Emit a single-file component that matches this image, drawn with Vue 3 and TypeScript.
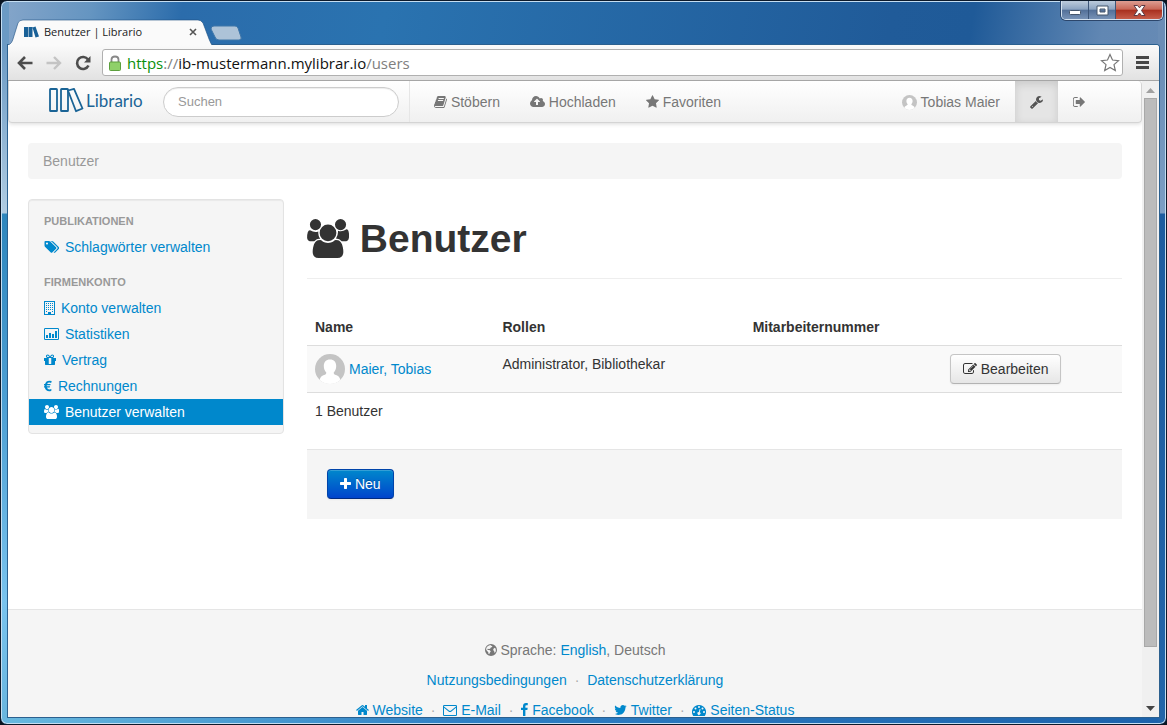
<script setup lang="ts">
import { h, ref } from 'vue'
import type { FunctionalComponent } from 'vue'

interface Glyph {
  x: number
  w: number
  d: string
}

const glyphs: Record<string, Glyph> = {
  book: { x: 64, w: 1664, d: 'M1703 478q40 57 18 129l-275 906q-19 64-76.500 107.500t-122.500 43.500h-923q-77 0-148.500-53.500t-99.500-131.500q-24-67-2-127 0-4 3-27t4-37q1-8-3-21.500t-3-19.500q2-11 8-21t16.500-23.500 16.500-23.500q23-38 45-91.500t30-91.500q3-10 .5-30t-.5-28q3-11 17-28t17-23q21-36 42-92t25-90q1-9-2.500-32t.5-28q4-13 22-30.500t22-22.500q19-26 42.500-84.500t27.500-96.500q1-8-3-25.500t-2-26.500q2-8 9-18t18-23 17-21q8-12 16.500-30.500t15-35 16-36 19.500-32 26.500-23.500 36-11.500 47.500 5.500l-1 3q38-9 51-9h761q74 0 114 56t18 130l-274 906q-36 119-71.500 153.500t-128.500 34.500h-869q-27 0-38 15-11 16-1 43 24 70 144 70h923q29 0 56-15.500t35-41.500l300-987q7-22 5-57 38 15 59 43zm-1064 2q-4 13 2 22.500t20 9.500h608q13 0 25.500-9.500t16.500-22.500l21-64q4-13-2-22.500t-20-9.500h-608q-13 0-25.500 9.500t-16.500 22.500zm-83 256q-4 13 2 22.500t20 9.500h608q13 0 25.500-9.500t16.500-22.500l21-64q4-13-2-22.500t-20-9.500h-608q-13 0-25.500 9.500t-16.500 22.500z' },
  cloud: { x: 64, w: 1920, d: 'M1344 864q0-14-9-23l-352-352q-9-9-23-9t-23 9l-351 351q-10 12-10 24 0 14 9 23t23 9h224v352q0 13 9.500 22.500t22.500 9.500h192q13 0 22.500-9.500t9.500-22.500v-352h224q13 0 22.500-9.500t9.500-22.500zm640 288q0 159-112.500 271.500t-271.500 112.500h-1088q-185 0-316.500-131.500t-131.500-316.500q0-130 70-240t188-165q-2-30-2-43 0-212 150-362t362-150q156 0 285.500 87t188.500 231q71-62 166-62 106 0 181 75t75 181q0 76-41 138 130 31 213.500 135.500t83.500 238.500z' },
  star: { x: 64, w: 1664, d: 'M1728 647q0 22-26 48l-363 354 86 500q1 7 1 20 0 21-10.500 35.500t-30.500 14.500q-19 0-40-12l-449-236-449 236q-22 12-40 12-21 0-31.500-14.500t-10.500-35.500q0-6 2-20l86-500-364-354q-25-27-25-48 0-37 56-46l502-73 225-455q19-41 49-41t49 41l225 455 502 73q56 9 56 46z' },
  wrench: { x: 64, w: 1664, d: 'M448 1472q0-26-19-45t-45-19-45 19-19 45 19 45 45 19 45-19 19-45zm644-420l-682 682q-37 37-90 37-52 0-91-37l-106-108q-38-36-38-90 0-53 38-91l681-681q39 98 114.500 173.500t173.500 114.500zm634-435q0 39-23 106-47 134-164.500 217.500t-258.500 83.500q-185 0-316.500-131.500t-131.500-316.500 131.500-316.500 316.500-131.500q58 0 121.500 16.500t107.500 46.500q16 11 16 28t-16 28l-293 169v224l193 107q5-3 79-48.500t135.500-81 70.500-35.500q15 0 23.500 10t8.500 25z' },
  signout: { x: 96, w: 1536, d: 'M704 1440q0 4 1 20t.5 26.500-3 23.500-10 19.500-20.500 6.500h-320q-119 0-203.500-84.500t-84.500-203.500v-704q0-119 84.500-203.500t203.500-84.500h320q13 0 22.500 9.500t9.500 22.500q0 4 1 20t.5 26.500-3 23.500-10 19.500-20.500 6.500h-320q-66 0-113 47t-47 113v704q0 66 47 113t113 47h312l11.500 1 11.500 3 8 5.500 7 9 2 13.500zm928-544q0 26-19 45l-544 544q-19 19-45 19t-45-19-19-45v-288h-448q-26 0-45-19t-19-45v-384q0-26 19-45t45-19h448v-288q0-26 19-45t45-19 45 19l544 544q19 19 19 45z' },
  tags: { x: 64, w: 1920, d: 'M576 448q0-53-37.500-90.500t-90.500-37.500-90.500 37.500-37.500 90.500 37.500 90.500 90.500 37.500 90.500-37.500 37.500-90.500zm1067 576q0 53-37 90l-491 492q-39 37-91 37-53 0-90-37l-715-716q-38-37-64.500-101t-26.500-117v-416q0-52 38-90t90-38h416q53 0 117 26.500t102 64.500l715 714q37 39 37 91zm384 0q0 53-37 90l-491 492q-39 37-91 37-36 0-59-14t-53-45l470-470q37-37 37-90 0-52-37-91l-715-714q-38-38-102-64.500t-117-26.500h224q53 0 117 26.500t102 64.500l715 714q37 39 37 91z' },
  building: { x: 0, w: 1408, d: 'M0 0h1408v1792h-1408zM128 128v1536h384v-256h384v256h384v-1536zM256 256h128v128h-128zM512 256h128v128h-128zM768 256h128v128h-128zM1024 256h128v128h-128zM256 512h128v128h-128zM512 512h128v128h-128zM768 512h128v128h-128zM1024 512h128v128h-128zM256 768h128v128h-128zM512 768h128v128h-128zM768 768h128v128h-128zM1024 768h128v128h-128zM256 1024h128v128h-128zM512 1024h128v128h-128zM768 1024h128v128h-128zM1024 1024h128v128h-128zM256 1280h128v128h-128zM1024 1280h128v128h-128z' },
  chart: { x: 0, w: 1920, d: 'M160 128h1600q160 0 160 160v1216q0 160-160 160h-1600q-160 0-160-160v-1216q0-160 160-160zM128 256v1280h1664v-1280zM256 1024h256v384h-256zM640 768h256v640h-256zM1024 896h256v512h-256zM1408 512h256v896h-256z' },
  gift: { x: 128, w: 1536, d: 'M1056 1356v-716h-320v716q0 25 18 38.500t46 13.500h192q28 0 46-13.500t18-38.500zm-456-844h195l-126-161q-26-31-69-31-40 0-68 28t-28 68 28 68 68 28zm688-96q0-40-28-68t-68-28q-43 0-69 31l-125 161h194q40 0 68-28t28-68zm376 256v320q0 14-9 23t-23 9h-96v416q0 40-28 68t-68 28h-1088q-40 0-68-28t-28-68v-416h-96q-14 0-23-9t-9-23v-320q0-14 9-23t23-9h440q-93 0-158.500-65.500t-65.500-158.500 65.500-158.500 158.500-65.500q107 0 168 77l128 165 128-165q61-77 168-77 93 0 158.500 65.500t65.500 158.500-65.500 158.500-158.500 65.500h440q14 0 23 9t9 23z' },
  euro: { x: 0, w: 1024, d: 'M0 640h130Q250 210 690 210q150 0 290 60l-60 230q-110-50-220-50-220 0-310 190h460l-40 160h-460v130h420l-40 160h-350q80 240 310 240 130 0 250-60v240q-130 70-280 70-430 0-560-490h-100v-160h80v-130h-80z' },
  users: { x: 0, w: 1920, d: 'M593 896q-162 5-265 128h-134q-82 0-138-40.500t-56-118.500q0-353 124-353 6 0 43.500 21t97.500 42.500 119 21.500q67 0 133-23-5 37-5 66 0 159 93 293zm1071 637q0 120-73 189.500t-194 69.500h-874q-121 0-194-69.500t-73-189.500q0-53 3.500-103.500t14-109 26.500-108.500 43-97.500 62-81 85.500-53.500 111.500-20q10 0 43 21.500t73 48 107 48 135 21.500 135-21.500 107-48 73-48 43-21.500q61 0 111.500 20t85.500 53.500 62 81 43 97.500 26.500 108.500 14 109 3.500 103.500zm-1024-1277q0 106-75 181t-181 75-181-75-75-181 75-181 181-75 181 75 75 181zm704 384q0 159-112.500 271.500t-271.500 112.500-271.500-112.500-112.500-271.500 112.500-271.500 271.500-112.500 271.500 112.500 112.500 271.500zm576 225q0 78-56 118.500t-138 40.500h-134q-103-123-265-128 93-134 93-293 0-29-5-66 66 23 133 23 59 0 119-21.500t97.500-42.500 43.500-21q124 0 124 353zm-128-609q0 106-75 181t-181 75-181-75-75-181 75-181 181-75 181 75 75 181z' },
  edit: { x: 0, w: 1792, d: 'M888 1184l116-116-152-152-116 116v56h96v96h56zm440-720q-16-16-33 1l-350 350q-17 17-1 33t33-1l350-350q17-17 1-33zm80 594v190q0 119-84.500 203.500t-203.500 84.500h-832q-119 0-203.500-84.500t-84.500-203.500v-832q0-119 84.500-203.500t203.500-84.500h832q63 0 117 25 15 7 18 23 3 17-9 29l-49 49q-14 14-32 8-23-6-45-6h-832q-66 0-113 47t-47 113v832q0 66 47 113t113 47h832q66 0 113-47t47-113v-126q0-13 9-22l64-64q15-15 35-7t20 29zm-96-738l288 288-672 672h-288v-288zm444 132l-92 92-288-288 92-92q28-28 68-28t68 28l152 152q28 28 28 68t-28 68z' },
  plus: { x: 192, w: 1408, d: 'M1600 736v192q0 40-28 68t-68 28h-416v416q0 40-28 68t-68 28h-192q-40 0-68-28t-28-68v-416h-416q-40 0-68-28t-28-68v-192q0-40 28-68t68-28h416v-416q0-40 28-68t68-28h192q40 0 68 28t28 68v416h416q40 0 68 28t28 68z' },
  globe: { x: 128, w: 1536, d: 'M896 128a768 768 0 1 0 0 1536a768 768 0 1 0 0-1536zM640 330l180-70 90 80 150 30-30 140-190 110-50 110-160 40-150-40-70 60 90 90 200 20 170 160-120 190-90 200-90-60-20-220-150-140-120-180q-30-330 360-520zM1240 700l150-90 100 120q60 200 0 380l-110 150-80-70 20-150-110-70-30-150z' },
  home: { x: 64, w: 1664, d: 'M1472 992v480q0 26-19 45t-45 19h-384v-384h-256v384h-384q-26 0-45-19t-19-45v-480q0-1 .5-3t.5-3l575-474 575 474q1 2 1 6zm223-69l-62 74q-8 9-21 11h-3q-13 0-21-7l-692-577-692 577q-12 8-24 7-13-2-21-11l-62-74q-8-10-7-23.500t11-21.500l719-599q32-26 76-26t76 26l244 204v-195q0-14 9-23t23-9h192q14 0 23 9t9 23v408l219 182q10 8 11 21.500t-7 23.500z' },
  mail: { x: 0, w: 1792, d: 'M160 256h1472q160 0 160 160v1088q0 160-160 160h-1472q-160 0-160-160v-1088q0-160 160-160zM128 600v936h1536v-936l-580 480q-188 150-376 0zM128 384v50l640 530q128 100 256 0l640-530v-50z' },
  facebook: { x: 479, w: 896, d: 'M1343 12v264h-157q-86 0-116 36t-30 108v189h293l-39 296h-254v759h-306v-759h-255v-296h255v-218q0-186 104-288.500t277-102.500q147 0 228 12z' },
  twitter: { x: 64, w: 1664, d: 'M1684 408q-67 98-162 167 1 14 1 42 0 130-38 259.500t-115.500 248.500-184.500 210.500-258 146-323 54.500q-271 0-496-145 35 4 78 4 225 0 401-138-105-2-188-64.500t-114-159.500q33 5 61 5 43 0 85-11-112-23-185.500-111.500t-73.500-205.500v-4q68 38 146 41-66-44-105-115t-39-154q0-88 44-163 121 149 294.500 238.500t371.500 99.500q-8-38-8-74 0-134 94.500-228.500t228.500-94.500q140 0 236 102 109-21 205-78-37 115-142 178 93-10 186-50z' },
  gauge: { x: 0, w: 1792, d: 'M896 256a896 896 0 0 1 760 1370q-30 38-80 38h-1360q-50 0-80-38a896 896 0 0 1 760-1370zM256 1024a128 128 0 1 0 0 256a128 128 0 1 0 0-256zM448 576a128 128 0 1 0 0 256a128 128 0 1 0 0-256zM896 384a128 128 0 1 0 0 256a128 128 0 1 0 0-256zM1344 576a128 128 0 1 0 0 256a128 128 0 1 0 0-256zM1536 1024a128 128 0 1 0 0 256a128 128 0 1 0 0-256zM980 760l-100 385a192 192 0 1 0 115 30l100-385z' },
}

const Icon: FunctionalComponent<{ name: string; size?: number }> = (props) => {
  const size = props.size ?? 14
  const g = glyphs[props.name]
  return h(
    'svg',
    { class: 'icon', width: Math.round((g.w * size) / 1792), height: size, viewBox: `${g.x} 0 ${g.w} 1792`, 'aria-hidden': 'true' },
    [h('path', { d: g.d, fill: 'currentColor', 'fill-rule': 'evenodd' })],
  )
}
Icon.props = ['name', 'size']

const Avatar: FunctionalComponent<{ size: number }> = (props) =>
  h('svg', { class: 'avatar', width: props.size, height: props.size, viewBox: '0 0 30 30', 'aria-hidden': 'true' }, [
    h('circle', { cx: 15, cy: 15, r: 15, fill: '#c4c4c4' }),
    h('path', {
      fill: '#fff',
      d: 'M15 5.500c4 0 6.200 2.700 6.200 6.500 0 2.700-1 5-2.500 6.400 0 1.500.8 2 2.300 2.600 2.400 1 3.900 2.200 4.300 4.900A15 15 0 0 1 4.700 25.900c.4-2.700 1.900-3.900 4.300-4.900 1.500-.6 2.300-1.100 2.300-2.600C9.800 17 8.800 14.700 8.800 12c0-3.800 2.200-6.500 6.200-6.500z',
    }),
  ])
Avatar.props = ['size']

const mainNav = [
  { icon: 'book', label: 'Stöbern' },
  { icon: 'cloud', label: 'Hochladen' },
  { icon: 'star', label: 'Favoriten' },
]

const groups = [
  { title: 'Publikationen', items: [{ icon: 'tags', label: 'Schlagwörter verwalten', active: false }] },
  {
    title: 'Firmenkonto',
    items: [
      { icon: 'building', label: 'Konto verwalten', active: false },
      { icon: 'chart', label: 'Statistiken', active: false },
      { icon: 'gift', label: 'Vertrag', active: false },
      { icon: 'euro', label: 'Rechnungen', active: false },
      { icon: 'users', label: 'Benutzer verwalten', active: true },
    ],
  },
]

const users = [{ name: 'Maier, Tobias', roles: 'Administrator, Bibliothekar', number: '' }]

const footerLinks = [
  { icon: 'home', label: 'Website' },
  { icon: 'mail', label: 'E-Mail' },
  { icon: 'facebook', label: 'Facebook' },
  { icon: 'twitter', label: 'Twitter' },
  { icon: 'gauge', label: 'Seiten-Status' },
]

const query = ref('')
</script>

<template>
  <div class="window">
    <div class="titlebar">
      <div class="tab">
        <svg class="tab-shape" viewBox="0 0 204 26" preserveAspectRatio="none" aria-hidden="true">
          <path d="M0 26C3 25 4 23 5 20L10 4Q11 1 15 1H190Q193 1 195 4L201 20Q203 25 204 26Z" fill="#fafafa" />
          <path d="M0 26C3 25 4 23 5 20L10 4Q11 1 15 1H190Q193 1 195 4L201 20Q203 25 204 26" fill="none" stroke="#1c4f80" stroke-opacity=".6" />
        </svg>
        <svg class="favicon" width="16" height="12" viewBox="0 0 16 12" aria-hidden="true">
          <path d="M1 1h4v10H1zM5.500 1h4v10h-4zM9.500 1.500l3-1 3.500 10-3.500 1z" fill="#1a6197" />
        </svg>
        <span class="tab-title">Benutzer | Librario</span>
        <button class="tab-close" aria-label="Tab schließen">
          <svg width="8" height="8" viewBox="0 0 8 8"><path d="M1 1l6 6M7 1L1 7" stroke="#555" stroke-width="1.600" /></svg>
        </button>
      </div>
      <button class="new-tab" aria-label="Neuer Tab">
        <svg width="32" height="16" viewBox="0 0 32 16">
          <path d="M4 1H25Q27 1 28 3L31 12Q32 15 29 15H9Q6 15 5 12L1 4Q1 1 4 1Z" fill="#adc3d8" stroke="#3f76a8" />
        </svg>
      </button>
      <div class="controls">
        <button class="ctl min" aria-label="Minimieren">
          <svg width="13" height="11" viewBox="0 0 13 11"><rect x=".5" y="5.500" width="11" height="4" rx="1" fill="#fff" stroke="#45566d" /></svg>
        </button>
        <button class="ctl max" aria-label="Maximieren">
          <svg width="13" height="11" viewBox="0 0 13 11"><path d="M1 1H12V10H1ZM4 4V7H9V4Z" fill="#fff" fill-rule="evenodd" stroke="#45566d" /></svg>
        </button>
        <button class="ctl close" aria-label="Schließen">
          <svg width="13" height="11" viewBox="0 0 13 11">
            <path d="M1 .5H4.500L6.500 2.800L8.500 .5H12L8.500 5.500L12 10.500H8.500L6.500 8L4.500 10.500H1L4.500 5.500Z" fill="#fff" stroke="#5b3a44" />
          </svg>
        </button>
      </div>
    </div>

    <div class="body">
      <div class="toolbar">
        <button class="tool" aria-label="Zurück">
          <svg width="16" height="16" viewBox="0 0 16 16"><path d="M8 2L2 8L8 14M2 8H15.500" fill="none" stroke="#4d4d4d" stroke-width="2.600" /></svg>
        </button>
        <button class="tool" aria-label="Vorwärts">
          <svg width="16" height="16" viewBox="0 0 16 16"><path d="M8 2L14 8L8 14M14 8H.5" fill="none" stroke="#c4c4c4" stroke-width="2.400" /></svg>
        </button>
        <button class="tool" aria-label="Neu laden">
          <svg width="16" height="16" viewBox="0 0 16 16">
            <path d="M13 4.500A6 6 0 1 0 13.500 10.500" fill="none" stroke="#4d4d4d" stroke-width="2.600" />
            <path d="M15.500 1V7.500H9Z" fill="#4d4d4d" />
          </svg>
        </button>
        <div class="address">
          <svg width="14" height="16" viewBox="0 0 14 16" aria-hidden="true">
            <path d="M3.500 8V4.500Q3.500 1.500 7 1.500T10.500 4.500V8" fill="none" stroke="#888" stroke-width="1.800" />
            <rect x="1.500" y="7" width="11" height="8.500" rx="1" fill="#8fd069" stroke="#5c9f3d" />
          </svg>
          <span class="url"><span class="scheme">https</span>://<span class="host">ib-mustermann.mylibrar.io</span>/users</span>
          <button class="mark" aria-label="Lesezeichen">
            <svg width="20" height="19" viewBox="0 0 20 19">
              <path d="M10 1.500L12.500 7L18.500 7.600L14 11.600L15.300 17.500L10 14.400L4.700 17.500L6 11.600L1.500 7.600L7.500 7Z" fill="#fff" stroke="#777" stroke-width="1.200" />
            </svg>
          </button>
        </div>
        <button class="menu" aria-label="Menü">
          <svg width="13" height="13" viewBox="0 0 13 13"><path d="M0 1.500H13M0 6.500H13M0 11.500H13" stroke="#484848" stroke-width="3" /></svg>
        </button>
      </div>

      <div class="viewport">
        <div class="page">
          <header class="navbar">
            <a class="brand" href="#">
              <svg width="35" height="27" viewBox="0 0 35 27" aria-hidden="true">
                <g fill="none" stroke="#1a6496" stroke-width="1.800" stroke-linejoin="round">
                  <rect x="1" y="1" width="7" height="22" rx=".6" />
                  <rect x="12" y="1" width="7" height="22" rx=".6" />
                  <path d="M19 2.500L25 .9L33.500 20.500L27 23.200Z" />
                </g>
              </svg>
              <span>Librario</span>
            </a>
            <input v-model="query" class="search" type="search" placeholder="Suchen" aria-label="Suchen" />
            <nav class="main-nav">
              <a v-for="item in mainNav" :key="item.label" href="#"><Icon :name="item.icon" /> {{ item.label }}</a>
            </nav>
            <nav class="user-nav">
              <a href="#"><Avatar :size="15" /> Tobias Maier</a>
              <a class="current" href="#" aria-label="Verwaltung"><Icon name="wrench" /></a>
              <a href="#" aria-label="Abmelden"><Icon name="signout" /></a>
            </nav>
          </header>

          <div class="content">
            <div class="crumb">Benutzer</div>
            <div class="columns">
              <aside class="side">
                <section v-for="group in groups" :key="group.title">
                  <h2>{{ group.title }}</h2>
                  <a v-for="item in group.items" :key="item.label" href="#" :class="{ active: item.active }"><Icon :name="item.icon" /> {{ item.label }}</a>
                </section>
              </aside>
              <main>
                <h1><Icon name="users" :size="39" /> Benutzer</h1>
                <table>
                  <thead>
                    <tr>
                      <th class="c-name">Name</th>
                      <th class="c-roles">Rollen</th>
                      <th class="c-number">Mitarbeiternummer</th>
                      <th></th>
                    </tr>
                  </thead>
                  <tbody>
                    <tr v-for="user in users" :key="user.name" class="odd">
                      <td><a class="person" href="#"><Avatar :size="30" />{{ user.name }}</a></td>
                      <td>{{ user.roles }}</td>
                      <td>{{ user.number }}</td>
                      <td><button class="btn"><Icon name="edit" /> Bearbeiten</button></td>
                    </tr>
                  </tbody>
                  <tfoot>
                    <tr><td colspan="4">{{ users.length }} Benutzer</td></tr>
                  </tfoot>
                </table>
                <div class="actions">
                  <button class="btn primary"><Icon name="plus" /> Neu</button>
                </div>
              </main>
            </div>
          </div>

          <footer class="footer">
            <p><Icon name="globe" /> Sprache: <a href="#">English</a>, Deutsch</p>
            <p><a href="#">Nutzungsbedingungen</a> <i>·</i> <a href="#">Datenschutzerklärung</a></p>
            <p>
              <template v-for="(link, i) in footerLinks" :key="link.label"><template v-if="i > 0">{{ ' ' }}<i>·</i>{{ ' ' }}</template><a href="#"><Icon :name="link.icon" /> {{ link.label }}</a></template>
            </p>
          </footer>
        </div>

        <div class="scrollbar" aria-hidden="true">
          <svg width="9" height="5" viewBox="0 0 9 5"><path d="M4.500 0L9 5H0Z" fill="#a0a0a0" /></svg>
          <div class="track"><div class="thumb"></div></div>
          <svg width="9" height="5" viewBox="0 0 9 5"><path d="M4.500 5L9 0H0Z" fill="#444" /></svg>
        </div>
      </div>
    </div>
  </div>
</template>

<style>
body {
  margin: 0;
  background: #0a1420;
}
</style>

<style scoped>
* {
  box-sizing: border-box;
}

button {
  margin: 0;
  padding: 0;
  border: 0;
  background: none;
  font: inherit;
}

.window {
  height: 100vh;
  padding: 0 7px 7px;
  display: flex;
  flex-direction: column;
  overflow: hidden;
  border: 1px solid #0d1a2b;
  border-radius: 7px;
  box-shadow: inset 0 0 0 1px #c5def2;
  background:
    linear-gradient(180deg, #6b9ac4 45px, #b0cce2 212px, #2e86bd 213px, #4d9fd3 400px, #79c3ee 600px, #68b5de) left / 8px 100% no-repeat,
    linear-gradient(180deg, #6a8db6 45px, #7c9ec4 212px, #1c5c9f 213px, #2265a9) right / 8px 100% no-repeat,
    linear-gradient(90deg, #68b9df, #2e7fc4 40%, #1c62ab) bottom / 100% 8px no-repeat,
    linear-gradient(100deg, #86a6ca, #6595c1 90px, #2b6cab 180px, #2a73b0 380px, #205b99 880px, #1f5a98 960px, #6187b3 1090px, #7090b8);
  font: 14px/20px Arial, "Liberation Sans", sans-serif;
  color: #333;
}

.titlebar {
  flex: none;
  height: 44px;
  display: flex;
  align-items: flex-end;
}

.tab {
  position: relative;
  width: 204px;
  height: 26px;
  padding: 0 15px;
  display: flex;
  align-items: center;
  gap: 5px;
}

.tab-shape {
  position: absolute;
  inset: 0;
  width: 100%;
  height: 100%;
}

.favicon,
.tab-title,
.tab-close {
  position: relative;
}

.tab-title {
  flex: 1;
  font: 11px/16px "Open Sans", "Noto Sans", sans-serif;
  color: #222;
  white-space: nowrap;
}

.tab-close {
  line-height: 0;
}

.new-tab {
  margin: 0 0 4px -2px;
  line-height: 0;
}

.controls {
  align-self: flex-start;
  display: flex;
  margin-left: auto;
  margin-right: -4px;
  border: 1px solid #d5e2ef;
  border-top: 0;
  border-radius: 0 0 5px 5px;
  overflow: hidden;
  box-shadow: 0 0 0 1px #2c466b;
}

.ctl {
  width: 27px;
  height: 18px;
  display: flex;
  align-items: center;
  justify-content: center;
  background: linear-gradient(#bccbdc, #8ba3c1 46%, #526f98 50%, #7792b6);
  border-right: 1px solid #3c5578;
}

.ctl.close {
  width: 46px;
  border-right: 0;
  background: linear-gradient(#dd9d92, #c96757 46%, #a82f1e 50%, #c65d4a);
}

.body {
  flex: 1;
  min-height: 0;
  display: flex;
  flex-direction: column;
  background: #fff;
  border-radius: 0 3px 0 0;
  box-shadow: 0 0 0 1px #2b608f;
}

.toolbar {
  flex: none;
  height: 36px;
  padding: 0 10px 0 9px;
  display: flex;
  align-items: center;
  gap: 13px;
  background: linear-gradient(#fafafa, #e2e2e2);
  border-bottom: 1px solid #a6a6a6;
  border-radius: 0 3px 0 0;
}

.tool,
.menu,
.mark {
  line-height: 0;
}

.address {
  flex: 1;
  height: 27px;
  margin-left: -2px;
  padding: 0 2px 0 5px;
  display: flex;
  align-items: center;
  gap: 5px;
  background: #fff;
  border: 1px solid #b0b0b0;
  border-radius: 3px;
}

.url {
  flex: 1;
  font: 15px/20px "Open Sans", "Noto Sans", sans-serif;
  color: #808080;
}

.scheme {
  color: #0b8f0b;
}

.host {
  color: #111;
}

.viewport {
  flex: 1;
  min-height: 0;
  display: flex;
}

.page {
  flex: 1;
  min-width: 0;
  overflow: hidden;
}

.navbar {
  height: 42px;
  padding: 0 41px 0 40px;
  display: flex;
  align-items: center;
  background: linear-gradient(#fff, #f0f0f0);
  border: 1px solid #d4d4d4;
  border-width: 0 1px 1px;
  border-radius: 0 4px 4px 4px;
  box-shadow: 0 1px 4px rgba(0, 0, 0, 0.15);
}

.brand {
  width: 114px;
  display: flex;
  align-items: center;
  gap: 2px;
  color: #1a6496;
  font: 17px/20px Lato, "Open Sans", sans-serif;
  text-decoration: none;
}

.brand span {
  padding-bottom: 2px;
}

.search {
  width: 236px;
  height: 30px;
  margin: 0;
  padding: 0 14px;
  border: 1px solid #ccc;
  border-radius: 15px;
  background: #fff;
  box-shadow: inset 0 1px 1px rgba(0, 0, 0, 0.075);
  font: 13px/20px Arial, "Liberation Sans", sans-serif;
  color: #555;
  outline: 0;
  appearance: none;
}

.search::placeholder {
  color: #999;
}

.main-nav,
.user-nav {
  align-self: stretch;
  display: flex;
}

.main-nav {
  margin-left: 10px;
  padding-left: 9px;
  border-left: 1px solid #e6e6e6;
}

.user-nav {
  margin-left: auto;
}

.navbar nav a {
  padding: 11px 15px 10px;
  color: #777;
  text-decoration: none;
  white-space: nowrap;
}

.navbar nav .current {
  background: #e5e5e5;
  box-shadow: inset 0 3px 8px rgba(0, 0, 0, 0.125);
  color: #555;
}

.icon {
  vertical-align: -2px;
}

.avatar {
  vertical-align: -3px;
}

.content {
  padding: 20px 20px 0;
}

.crumb {
  padding: 8px 15px;
  background: #f5f5f5;
  border-radius: 4px;
  color: #999;
}

.columns {
  margin-top: 20px;
  display: grid;
  grid-template-columns: 256px minmax(0, 1fr);
  gap: 23px;
  align-items: start;
}

.side {
  padding: 8px 0;
  background: #f5f5f5;
  border: 1px solid #e3e3e3;
  border-radius: 4px;
  box-shadow: inset 0 1px 1px rgba(0, 0, 0, 0.05);
}

.side section + section {
  margin-top: 9px;
}

.side h2 {
  margin: 0;
  padding: 0 15px;
  font-size: 11px;
  line-height: 26px;
  color: #999;
  text-transform: uppercase;
}

.side a {
  display: block;
  padding: 3px 15px;
}

.side .icon {
  margin-right: 2px;
}

.side a.active {
  background: #08c;
  color: #fff;
}

a {
  color: #08c;
  text-decoration: none;
}

h1 {
  margin: 20px 0 30px;
  padding-bottom: 19px;
  border-bottom: 1px solid #eee;
  font-size: 39px;
  line-height: 40px;
}

h1 .icon {
  vertical-align: -6px;
}

table {
  width: 100%;
  border-collapse: separate;
  border-spacing: 0;
  table-layout: fixed;
}

th,
td {
  padding: 8px;
  text-align: left;
  vertical-align: top;
}

td {
  border-top: 1px solid #ddd;
}

.c-name {
  width: 23%;
}

.c-roles {
  width: 30.7%;
}

.c-number {
  width: 24.2%;
}

.odd td {
  background: #f9f9f9;
}

.person {
  display: flex;
  align-items: center;
  gap: 4px;
}

.btn {
  display: block;
  height: 30px;
  padding: 0 12px;
  border: 1px solid #c5c5c5;
  border-bottom-color: #b3b3b3;
  border-radius: 4px;
  background: linear-gradient(#fff, #e6e6e6);
  box-shadow: inset 0 1px 0 rgba(255, 255, 255, 0.2), 0 1px 2px rgba(0, 0, 0, 0.05);
  color: #333;
}

.btn.primary {
  border-color: #0044aa;
  border-bottom-color: #002a80;
  background: linear-gradient(#08c, #04c);
  color: #fff;
  text-shadow: 0 -1px 0 rgba(0, 0, 0, 0.25);
}

.actions {
  margin-top: 20px;
  padding: 19px 20px 20px;
  background: #f5f5f5;
  border-top: 1px solid #e5e5e5;
}

.footer {
  margin-top: 90px;
  padding: 30px 20px;
  background: #f5f5f5;
  border-top: 1px solid #e5e5e5;
  text-align: center;
  color: #777;
}

.footer p {
  margin: 0 0 10px;
}

.footer i {
  margin: 0 4px;
  font-style: normal;
  color: #aaa;
}

.scrollbar {
  flex: none;
  width: 17px;
  padding: 7px 0 6px;
  display: flex;
  flex-direction: column;
  align-items: center;
  gap: 5px;
  background: #f0f0f0;
}

.track {
  flex: 1;
  width: 13px;
}

.thumb {
  height: 91%;
  background: #bcbcbc;
  border: 1px solid #a8a8a8;
}
</style>
